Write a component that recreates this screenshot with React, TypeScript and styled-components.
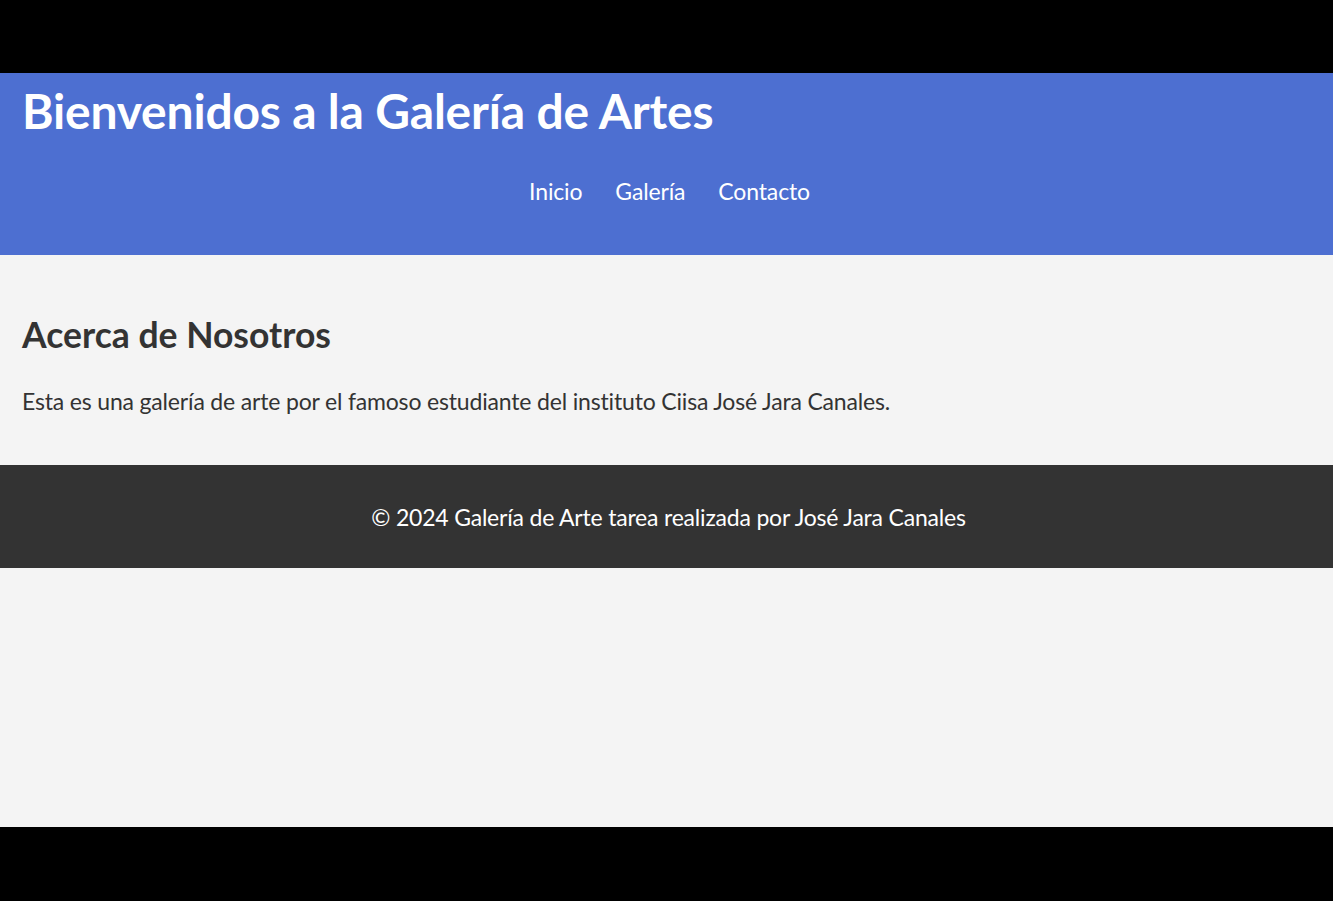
import React from "react";
import styled, { createGlobalStyle } from "styled-components";

const Global = createGlobalStyle`
  html, body { margin: 0; padding: 0; background: #000; }
  body { font-family: "Lato", "Open Sans", sans-serif; }
  * { box-sizing: border-box; }
`;

const Frame = styled.div`
  margin-top: 73px;
  height: 754px;
  background: #f4f4f4;
  display: flex;
  flex-direction: column;
`;

const Header = styled.header`
  background: #4d6fd1;
  color: #fff;
  height: 182px;
  padding: 8px 22px 0;
  display: flex;
  flex-direction: column;
`;

const Title = styled.h1`
  margin: 0;
  font-size: 48px;
  line-height: 60px;
  font-weight: 700;
  letter-spacing: -0.2px;
`;

const Nav = styled.nav`
  margin-top: 34px;
  display: flex;
  justify-content: center;
  gap: 33px;
  padding-left: 6px;
`;

const NavLink = styled.a`
  color: #fff;
  text-decoration: none;
  font-size: 23px;
  line-height: 32px;
  letter-spacing: -0.15px;
`;

const Main = styled.main`
  padding: 58px 22px 48px;
  color: #333;
`;

const Heading = styled.h2`
  margin: 0 0 28px;
  font-size: 35.5px;
  line-height: 44px;
  font-weight: 700;
`;

const Paragraph = styled.p`
  margin: 0;
  font-size: 23px;
  line-height: 32px;
  letter-spacing: -0.17px;
`;

const Footer = styled.footer`
  background: #333;
  color: #fff;
  height: 103px;
  display: flex;
  align-items: center;
  justify-content: center;
  font-size: 23px;
  letter-spacing: -0.2px;
  padding-left: 4px;
`;

export default function App() {
  return (
    <>
      <Global />
      <Frame>
        <Header>
          <Title>Bienvenidos a la Galería de Artes</Title>
          <Nav>
            <NavLink href="#">Inicio</NavLink>
            <NavLink href="#">Galería</NavLink>
            <NavLink href="#">Contacto</NavLink>
          </Nav>
        </Header>
        <Main>
          <Heading>Acerca de Nosotros</Heading>
          <Paragraph>
            Esta es una galería de arte por el famoso estudiante del instituto Ciisa José Jara Canales.
          </Paragraph>
        </Main>
        <Footer>© 2024 Galería de Arte tarea realizada por José Jara Canales</Footer>
      </Frame>
    </>
  );
}
